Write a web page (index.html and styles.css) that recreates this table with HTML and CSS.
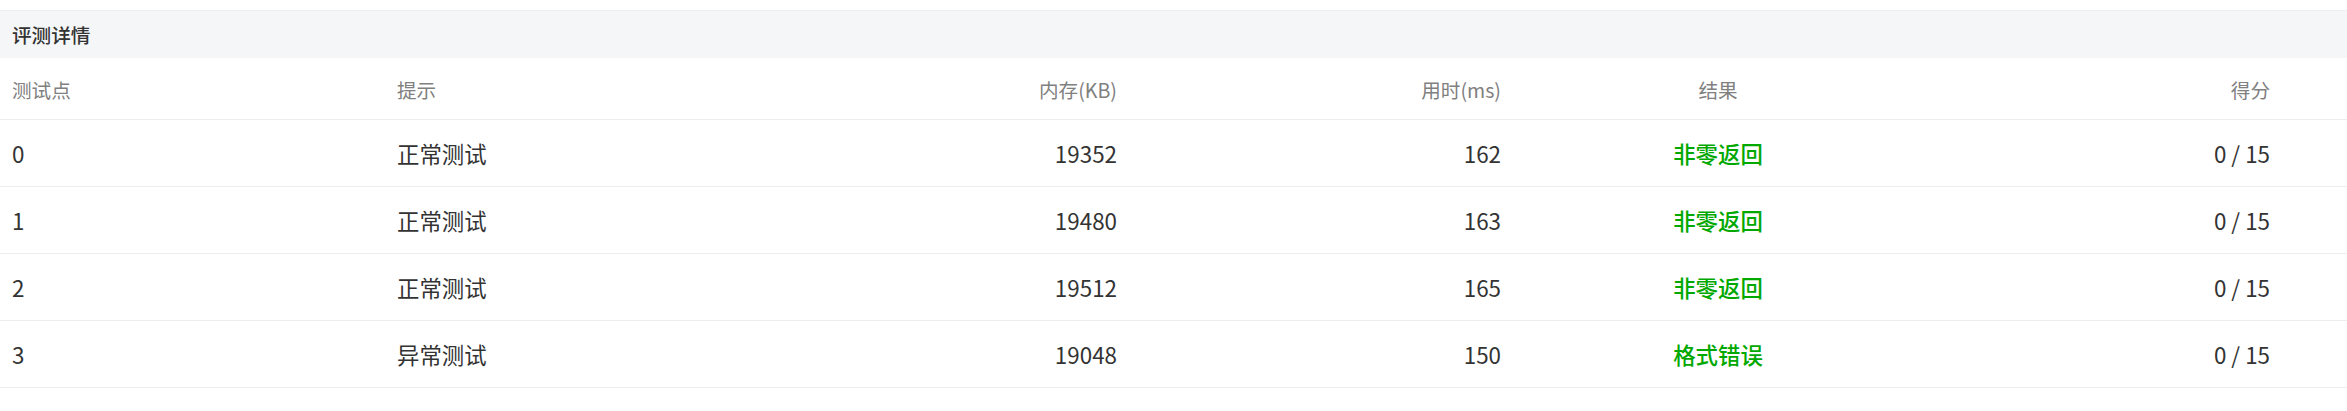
FILE: index.html
```html
<!DOCTYPE html>
<html lang="zh-CN">
<head>
<meta charset="utf-8">
<title>评测详情</title>
<link rel="stylesheet" href="styles.css">
</head>
<body>
<section class="panel">
  <div class="panel-title">评测详情</div>
  <div class="table">
    <div class="row head">
      <div class="cell left">测试点</div>
      <div class="cell left">提示</div>
      <div class="cell"></div>
      <div class="cell right">内存(KB)</div>
      <div class="cell right">用时(ms)</div>
      <div class="cell center">结果</div>
      <div class="cell right">得分</div>
      <div class="cell"></div>
    </div>
    <div class="row">
      <div class="cell left">0</div>
      <div class="cell left">正常测试</div>
      <div class="cell"></div>
      <div class="cell right">19352</div>
      <div class="cell right">162</div>
      <div class="cell center status">非零返回</div>
      <div class="cell right">0 / 15</div>
      <div class="cell"></div>
    </div>
    <div class="row">
      <div class="cell left">1</div>
      <div class="cell left">正常测试</div>
      <div class="cell"></div>
      <div class="cell right">19480</div>
      <div class="cell right">163</div>
      <div class="cell center status">非零返回</div>
      <div class="cell right">0 / 15</div>
      <div class="cell"></div>
    </div>
    <div class="row">
      <div class="cell left">2</div>
      <div class="cell left">正常测试</div>
      <div class="cell"></div>
      <div class="cell right">19512</div>
      <div class="cell right">165</div>
      <div class="cell center status">非零返回</div>
      <div class="cell right">0 / 15</div>
      <div class="cell"></div>
    </div>
    <div class="row">
      <div class="cell left">3</div>
      <div class="cell left">异常测试</div>
      <div class="cell"></div>
      <div class="cell right">19048</div>
      <div class="cell right">150</div>
      <div class="cell center status">格式错误</div>
      <div class="cell right">0 / 15</div>
      <div class="cell"></div>
    </div>
  </div>
</section>
</body>
</html>
```

FILE: styles.css
```css
html, body {
  margin: 0;
  padding: 0;
  background: #ffffff;
}

body {
  font-family: "Noto Sans CJK SC", "Noto Sans", sans-serif;
  color: #333333;
  padding-top: 10px;
}

.panel-title {
  height: 47px;
  border-top: 1px solid #eceef1;
  background: #f5f6f8;
  display: flex;
  align-items: center;
  padding: 0 12px;
  font-size: 19.6px;
  color: #333333;
  font-weight: 500;
}

.row {
  display: grid;
  grid-template-columns: 385px 372px 0px 372px 384px 410px 359px 1fr;
  height: 67px;
  box-sizing: border-box;
  border-bottom: 1px solid #ebedf0;
  align-items: center;
  font-size: 22.4px;
  color: #333333;
}

.row.head {
  height: 62px;
  font-size: 19.6px;
  color: #808080;
  padding-top: 2px;
}

.cell {
  padding: 0 12px;
  white-space: nowrap;
}

.left { text-align: left; }
.right { text-align: right; }
.center { text-align: center; }

.status {
  color: #00a800;
  font-weight: 500;
}
```
